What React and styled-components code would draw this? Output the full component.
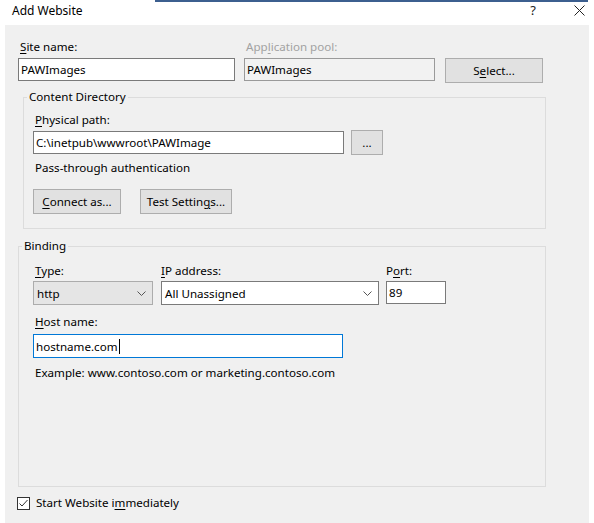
import React from 'react';
import styled, { createGlobalStyle } from 'styled-components';

// Page defaults
const GlobalStyle = createGlobalStyle`
  html, body {
    margin: 0;
    padding: 0;
    background: #ffffff;
  }
  body {
    font-family: "Noto Sans", "Open Sans", sans-serif;
    font-size: 11.6px;
    color: #000000;
  }
  * {
    box-sizing: border-box;
  }
`;

// Window chrome
const Window = styled.div`
  width: 594px;
  height: 523px;
  display: flex;
  flex-direction: column;
  background: #ffffff;
  overflow: hidden;
`;

const TitleBar = styled.div`
  position: relative;
  height: 25px;
  flex: none;
  display: flex;
  align-items: center;
  padding: 0 7px 5px 12px;

  &::before {
    content: '';
    position: absolute;
    top: 0;
    left: 155px;
    right: 6px;
    height: 2px;
    background: #3c5f8f;
  }
`;

const Title = styled.span`
  flex: 1;
  font-size: 12px;
`;

const TitleButton = styled.span`
  width: ${props => props.width}px;
  margin-right: ${props => props.gap || 0}px;
  display: flex;
  justify-content: center;
  align-items: center;
  font-size: 13px;
  color: #222;
`;

// Dialog body
const Body = styled.div`
  flex: 1;
  margin: 0 5px;
  background: #f0f0f0;
  display: flex;
  flex-direction: column;
  padding: 14px 0 0 13px;
`;

const Row = styled.div`
  display: flex;
  align-items: ${props => props.align || 'flex-start'};
  gap: ${props => props.gap || 0}px;
  margin-top: ${props => props.top || 0}px;
`;

const Field = styled.div`
  display: flex;
  flex-direction: column;
  gap: ${props => props.gap || 3}px;
  margin-left: ${props => props.left || 0}px;
`;

const Label = styled.div`
  line-height: 16px;
  height: 16px;
  padding-left: ${props => (props.indent !== undefined ? props.indent : 2)}px;
  color: ${props => (props.disabled ? '#a2a2a2' : '#000')};
  white-space: nowrap;
`;

const Key = styled.span`
  text-decoration: underline;
  text-underline-offset: 2px;
`;

const Text = styled.div`
  line-height: 16px;
  padding-left: 2px;
  margin-top: ${props => props.top || 0}px;
  white-space: nowrap;
`;

const TextBox = styled.div`
  width: ${props => props.width}px;
  height: ${props => props.height || 23}px;
  display: flex;
  align-items: center;
  padding-left: 2px;
  background: ${props => (props.disabled ? '#f2f2f2' : '#ffffff')};
  border: 1px solid ${props => (props.focused ? '#0078d7' : props.disabled ? '#9a9a9a' : '#7a7a7a')};
  white-space: nowrap;
`;

const Caret = styled.span`
  display: inline-block;
  width: 1px;
  height: 15px;
  background: #000;
  margin-left: 1px;
`;

const Combo = styled.div`
  width: ${props => props.width}px;
  height: 24px;
  display: flex;
  align-items: center;
  justify-content: space-between;
  padding: 0 6px 0 3px;
  background: ${props => (props.readOnly ? '#e5e5e5' : '#ffffff')};
  border: 1px solid ${props => (props.readOnly ? '#acacac' : '#7a7a7a')};
`;

const Button = styled.div`
  width: ${props => props.width}px;
  height: 25px;
  margin-top: ${props => props.top || 0}px;
  margin-left: ${props => props.left || 0}px;
  display: flex;
  align-items: center;
  justify-content: center;
  background: #e1e1e1;
  border: 1px solid #adadad;
  white-space: nowrap;
`;

// Group boxes
const GroupBox = styled.div`
  position: relative;
  width: ${props => props.width}px;
  height: ${props => (props.height ? `${props.height}px` : 'auto')};
  margin: ${props => props.top}px 0 0 ${props => props.left || 0}px;
  border: 1px solid #dcdcdc;
  padding: ${props => props.padTop}px 0 14px ${props => props.padLeft}px;
`;

const Caption = styled.span`
  position: absolute;
  top: -9px;
  left: 3px;
  padding: 0 2px;
  line-height: 16px;
  background: #f0f0f0;
`;

const CheckRow = styled.div`
  display: flex;
  align-items: center;
  gap: 6px;
  margin: 8px 0 0 -1px;
  line-height: 16px;
`;

const CheckBox = styled.span`
  width: 13px;
  height: 13px;
  display: flex;
  align-items: center;
  justify-content: center;
  background: #ffffff;
  border: 1px solid #333333;
`;

const Chevron = () => (
  <svg width="9" height="5" viewBox="0 0 9 5">
    <polyline points="0.5,0.5 4.5,4.5 8.5,0.5" fill="none" stroke="#555" strokeWidth="1" />
  </svg>
);

const CloseIcon = () => (
  <svg width="11" height="11" viewBox="0 0 11 11">
    <line x1="0.5" y1="0.5" x2="10.5" y2="10.5" stroke="#222" strokeWidth="1" />
    <line x1="10.5" y1="0.5" x2="0.5" y2="10.5" stroke="#222" strokeWidth="1" />
  </svg>
);

const CheckMark = () => (
  <svg width="11" height="11" viewBox="0 0 11 11">
    <polyline points="1.5,5.5 4,8 9.5,2" fill="none" stroke="#333" strokeWidth="1" />
  </svg>
);

const App = () => {
  return (
    <>
      <GlobalStyle />
      <Window>
        <TitleBar>
          <Title>Add Website</Title>
          <TitleButton width={18} gap={29}>?</TitleButton>
          <TitleButton width={16}><CloseIcon /></TitleButton>
        </TitleBar>

        <Body>
          <Row>
            <Field>
              <Label><Key>S</Key>ite name:</Label>
              <TextBox width={217}>PAWImages</TextBox>
            </Field>
            <Field left={9}>
              <Label disabled>App<Key>l</Key>ication pool:</Label>
              <TextBox width={191} disabled>PAWImages</TextBox>
            </Field>
            <Button width={98} top={19} left={10}>S<Key>e</Key>lect...</Button>
          </Row>

          <GroupBox width={523} left={5} top={14} padTop={14} padLeft={9}>
            <Caption>Content Directory</Caption>
            <Field gap={2}>
              <Label><Key>P</Key>hysical path:</Label>
              <Row align="center" gap={7}>
                <TextBox width={311}>C:\inetpub\wwwroot\PAWImage</TextBox>
                <Button width={32}>...</Button>
              </Row>
            </Field>
            <Text top={5}>Pass-through authentication</Text>
            <Row gap={19} top={13}>
              <Button width={88}><Key>C</Key>onnect as...</Button>
              <Button width={92}>Test Settin<Key>g</Key>s...</Button>
            </Row>
          </GroupBox>

          <GroupBox width={528} height={241} top={17} padTop={16} padLeft={14}>
            <Caption>Binding</Caption>
            <Row>
              <Field gap={2}>
                <Label><Key>T</Key>ype:</Label>
                <Combo width={120} readOnly>http<Chevron /></Combo>
              </Field>
              <Field gap={2} left={8}>
                <Label indent={0}><Key>I</Key>P address:</Label>
                <Combo width={218}>All Unassigned<Chevron /></Combo>
              </Field>
              <Field gap={2} left={7}>
                <Label indent={0}>P<Key>o</Key>rt:</Label>
                <TextBox width={60}>89</TextBox>
              </Field>
            </Row>
            <Field gap={4} style={{ marginTop: 9 }}>
              <Label><Key>H</Key>ost name:</Label>
              <TextBox width={310} height={24} focused>hostname.com<Caret /></TextBox>
            </Field>
            <Text top={7}>Example: www.contoso.com or marketing.contoso.com</Text>
          </GroupBox>

          <CheckRow>
            <CheckBox><CheckMark /></CheckBox>
            <span>Start Website i<Key>m</Key>mediately</span>
          </CheckRow>
        </Body>
      </Window>
    </>
  );
};

export default App;
